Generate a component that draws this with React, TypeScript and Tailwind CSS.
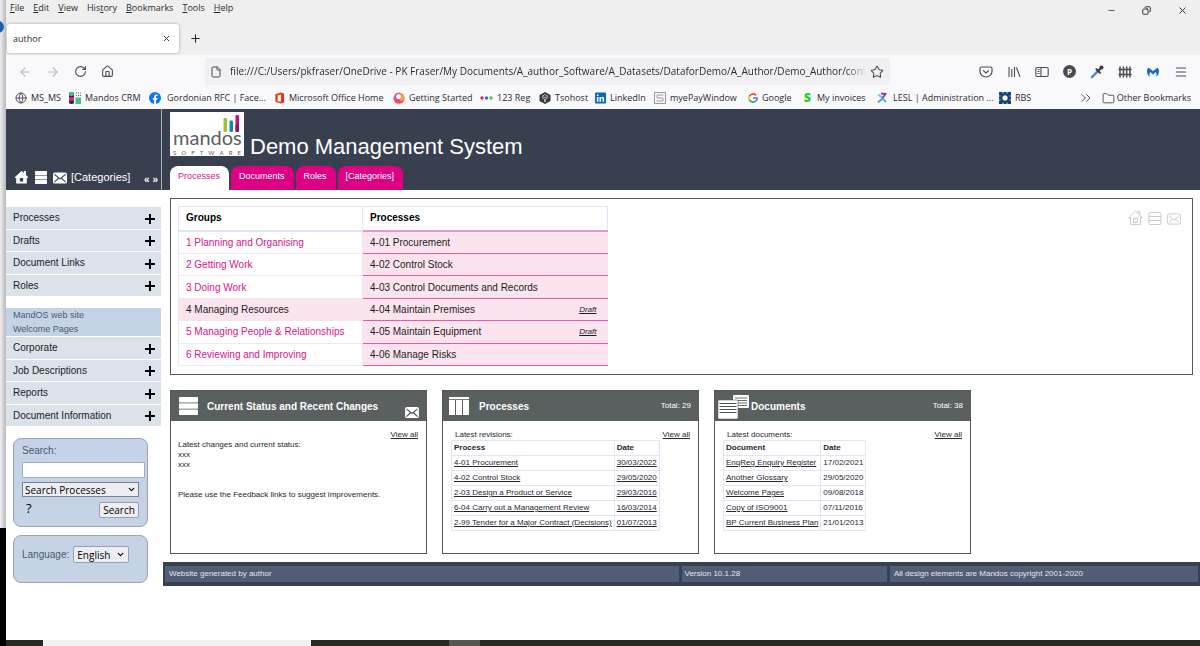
import React from "react";
import {
  ArrowLeft,
  ArrowRight,
  ChevronDown,
  ChevronsRight,
  Copy,
  File,
  Folder,
  Globe,
  House,
  Menu,
  Minus,
  Plus,
  RotateCw,
  Star,
  X,
} from "lucide-react";

/* ---------- page icons ---------- */

type IconProps = { className?: string };

function HomeGlyph({ className }: IconProps) {
  return (
    <svg viewBox="0 0 14 14" className={className} aria-hidden="true">
      <path fill="currentColor" fillRule="evenodd" d="M7 .5 9.500 2.800V.5h2.300v4.300L14 7v1h-1.300v6H1.300V8H0V7zM5.200 8v3.800h3.600V8z" />
    </svg>
  );
}

function HomeOutline({ className }: IconProps) {
  return (
    <svg viewBox="0 0 15 15" className={className} fill="none" stroke="currentColor" aria-hidden="true">
      <path d="M.6 7.800 7.500 1.200l6.900 6.600h-2v6.600H2.600V7.800zM10 3.400V1.600h2v3.700M5.500 8.500h4v4h-4z" />
    </svg>
  );
}

function ListGlyph({ className }: IconProps) {
  return (
    <svg viewBox="0 0 20 20" className={className} preserveAspectRatio="none" aria-hidden="true">
      <g fill="currentColor">
        <rect x="0" y="0" width="20" height="6" rx="1" />
        <rect x="0" y="7" width="20" height="6" />
        <rect x="0" y="14" width="20" height="6" rx="1" />
      </g>
    </svg>
  );
}

function ListOutline({ className }: IconProps) {
  return (
    <svg viewBox="0 0 14 14" className={className} fill="none" stroke="currentColor" aria-hidden="true">
      <rect x="1" y="1.500" width="12" height="4" rx="1" />
      <rect x="1" y="5.500" width="12" height="4" />
      <rect x="1" y="9.500" width="12" height="4" rx="1" />
    </svg>
  );
}

function MailGlyph({ className }: IconProps) {
  return (
    <svg viewBox="0 0 15 12" className={className} aria-hidden="true">
      <rect width="15" height="12" rx="2" fill="currentColor" />
      <path d="M1.500 2 7.500 7l6-5M1.500 10.500l4.500-4.500M13.500 10.500 9 6" fill="none" stroke="#4a505c" strokeWidth="1.200" />
    </svg>
  );
}

function MailOutline({ className }: IconProps) {
  return (
    <svg viewBox="0 0 15 12" className={className} fill="none" stroke="currentColor" aria-hidden="true">
      <rect x=".5" y=".5" width="14" height="11" rx="2" />
      <path d="m2 2.500 5.500 4.500L13 2.500M2 10l4-4M13 10 9 6" />
    </svg>
  );
}

function ColumnsGlyph({ className }: IconProps) {
  return (
    <svg viewBox="0 0 20 18" className={className} aria-hidden="true">
      <g fill="#fff">
        <rect width="20" height="2.200" />
        <rect x="0" y="3" width="6" height="15" />
        <rect x="7" y="3" width="6" height="15" />
        <rect x="14" y="3" width="6" height="15" />
      </g>
    </svg>
  );
}

function DocsGlyph({ className }: IconProps) {
  return (
    <svg viewBox="0 0 31 25" className={className} aria-hidden="true">
      <rect x="15" y="1" width="16" height="13" rx="1" fill="#fff" />
      <path d="M17 4h12M17 6.500h12M17 9h12M17 11.500h12" stroke="#5a5f60" strokeWidth=".9" />
      <rect x="0" y="6" width="20" height="19" rx="1" fill="#fff" stroke="#5a5f60" strokeWidth=".6" />
      <path d="M1.500 9.500h17M1.500 12.500h17M1.500 15.500h17M1.500 18.500h17" stroke="#4d5253" strokeWidth="1.200" />
    </svg>
  );
}

function MandosLogo() {
  return (
    <div className="relative flex h-11 w-[74px] flex-col justify-end overflow-hidden bg-white px-[3px]">
      <svg viewBox="0 0 17 18" className="absolute right-[4px] top-[3px] h-[18px] w-[17px]" aria-hidden="true">
        <rect x="0.500" y="3" width="3.500" height="14" rx="1.200" fill="#9cc13c" />
        <rect x="6.500" y="5.500" width="3.500" height="11.500" rx="1.200" fill="#1b83b5" />
        <rect x="12.500" y="0" width="3.500" height="17" rx="1.200" fill="#c4107c" />
        <rect x="12.500" y="9.500" width="3.500" height="7.500" rx="1.200" fill="#7a1d6f" />
      </svg>
      <div className="text-center font-['Lato',sans-serif] text-[20px] leading-6 text-[#5d6062]">mandos</div>
      <div className="flex justify-between font-['Lato',sans-serif] text-[6px] leading-[7px] text-[#5d6062]">
        {"SOFTWARE".split("").map((c, i) => (
          <span key={i}>{c}</span>
        ))}
      </div>
    </div>
  );
}

/* ---------- browser chrome ---------- */

const menus = ["File", "Edit", "View", "History", "Bookmarks", "Tools", "Help"];
const menuKey: Record<string, number> = { File: 0, Edit: 0, View: 0, History: 3, Bookmarks: 0, Tools: 0, Help: 0 };

function MenuBar() {
  return (
    <nav className="flex h-4 items-center gap-[9px] pl-1 text-[9px] text-[#2b2b2f]">
      {menus.map((m) => (
        <button key={m} type="button" className="leading-4">
          {m.slice(0, menuKey[m])}
          <span className="underline">{m[menuKey[m]]}</span>
          {m.slice(menuKey[m] + 1)}
        </button>
      ))}
    </nav>
  );
}

function TabStrip() {
  return (
    <div className="flex h-[39px] items-start pt-2">
      <div className="ml-px flex h-[29px] w-[172px] items-center justify-between rounded-[3px] bg-white pl-[6px] pr-2 text-[9px] shadow-[0_0_3px_rgba(0,0,0,0.35)]">
        <span>author</span>
        <button type="button" aria-label="Close tab">
          <X className="size-[9px]" strokeWidth={2.5} />
        </button>
      </div>
      <button type="button" aria-label="New tab" className="ml-[10px] mt-2">
        <Plus className="size-[13px]" strokeWidth={2} />
      </button>
    </div>
  );
}

function NavToolbar() {
  return (
    <div className="flex h-[33px] items-center bg-[#f9f9fb] text-[#4c4c52]">
      <div className="flex w-[199px] items-center gap-[14px] pl-3">
        <ArrowLeft className="size-[14px] text-[#b9b9bf]" />
        <ArrowRight className="size-[14px] text-[#b9b9bf]" />
        <RotateCw className="size-[13px]" />
        <House className="size-[13px]" />
      </div>
      <div className="flex h-[27px] w-[685px] items-center rounded-[3px] bg-[#f0f0f4] pl-1">
        <File className="ml-px size-3 shrink-0" />
        <input
          aria-label="Address"
          className="ml-2 min-w-0 flex-1 bg-transparent text-[10px] text-[#2b2b33] outline-none [mask-image:linear-gradient(to_right,black_97%,transparent)]"
          defaultValue="file:///C:/Users/pkfraser/OneDrive - PK Fraser/My Documents/A_author_Software/A_Datasets/DataforDemo/A_Author/Demo_Author/content"
        />
        <Star className="ml-1 mr-[6px] size-[14px] shrink-0" strokeWidth={1.8} />
      </div>
      <div className="ml-auto flex items-center gap-[14px] pr-3">
        <svg viewBox="0 0 14 14" className="size-[14px]" fill="none" stroke="currentColor" strokeWidth="1.200" aria-hidden="true">
          <path d="M2.500 2h9A1.500 1.500 0 0 1 13 3.500V6.500a6 5.500 0 0 1-12 0v-3A1.500 1.500 0 0 1 2.500 2zM4.200 5.500 7 8l2.800-2.500" />
        </svg>
        <svg viewBox="0 0 14 14" className="size-[14px]" fill="none" stroke="currentColor" strokeWidth="1.100" aria-hidden="true">
          <path d="M2 2v10M4.800 4v8M7.500 2v10M9.500 2.500 13 12" />
        </svg>
        <svg viewBox="0 0 14 14" className="size-[14px]" fill="none" stroke="currentColor" strokeWidth="1.100" aria-hidden="true">
          <rect x=".8" y="2.500" width="12.400" height="9" rx="1.500" />
          <path d="M6 2.500v9M2.500 4.500h2M2.500 6.500h2M2.500 8.500h2" />
        </svg>
        <span className="flex size-[13px] items-center justify-center rounded-full bg-[#4b4b4f] text-[8px] font-bold text-white">P</span>
        <svg viewBox="0 0 14 14" className="size-[14px]" aria-hidden="true">
          <path d="M2 12.200 7.500 6.500" stroke="#4b86cc" strokeWidth="2.400" strokeLinecap="round" />
          <path d="m6.500 4.300 3.400 3.400M8 6l3-3" stroke="#3c3c44" strokeWidth="2.200" strokeLinecap="round" />
          <circle cx="11.500" cy="2.600" r="2" fill="#3c3c44" />
        </svg>
        <svg viewBox="0 0 14 14" className="size-[14px]" fill="none" stroke="currentColor" strokeWidth="1.500" aria-hidden="true">
          <path d="M2 1.500v11M5.400 1.500v11M8.700 1.500v11M12 1.500v11M.5 4.500h13M.5 9.500h13" />
        </svg>
        <svg viewBox="0 0 14 14" className="size-[14px]" aria-hidden="true">
          <path d="M2.800 4.200 7 7.800l4.200-3.600" fill="none" stroke="#1766c8" strokeWidth="2.400" />
          <path d="M2.500 2.500C.2 4.500.5 9.500 3.800 11.800c-.6-2-.4-3.800.7-5.300zM11.500 2.500c2.300 2 2 7-1.300 9.300.6-2 .4-3.800-.7-5.300z" fill="#1766c8" />
        </svg>
        <Menu className="size-[14px]" strokeWidth={1.8} />
      </div>
    </div>
  );
}

function OfficeIcon() {
  return (
    <svg viewBox="0 0 12 12" className="h-3 w-[11px]" aria-hidden="true">
      <path fillRule="evenodd" fill="#dc3c12" d="M7.500 0 11 1.200v9.600L7.500 12 1.500 10V2zM7.500 2.200 4 3v5.600l-1.200.7L7.500 10z" />
    </svg>
  );
}

function Bookmark({ icon, label, width }: { icon: React.ReactNode; label: string; width: string }) {
  return (
    <a href="#" className={`flex shrink-0 items-center gap-1 ${width}`}>
      {icon}
      <span className="whitespace-nowrap">{label}</span>
    </a>
  );
}

function BookmarksBar() {
  return (
    <div className="flex h-[21px] items-center bg-[#f9f9fb] pb-px pl-[9px] text-[9px] text-[#2b2b33]">
      <Bookmark width="w-[54px]" label="MS_MS" icon={<Globe className="size-3 text-[#55555c]" />} />
      <Bookmark
        width="w-20"
        label="Mandos CRM"
        icon={
          <svg viewBox="0 0 12 12" className="size-3" aria-hidden="true">
            <rect x="0" y="0" width="5" height="12" rx="2" fill="#1f2a4d" />
            <rect x="0" y="0" width="5" height="4" rx="2" fill="#48bd8d" />
            <rect x="0" y="5" width="5" height="4" fill="#e0226e" />
            <rect x="6.500" y="5.500" width="5.500" height="6.500" fill="#48bd8d" />
            <path d="M7 1h5M7 3.500h5" stroke="#6a6a88" strokeDasharray="1.200 .8" />
          </svg>
        }
      />
      <Bookmark
        width="w-[125px]"
        label="Gordonian RFC | Face..."
        icon={
          <svg viewBox="0 0 12 12" className="mr-[2px] size-3" aria-hidden="true">
            <circle cx="6" cy="6" r="6" fill="#0f77ef" />
            <path d="M5.200 12V7.700H3.800V6h1.400V4.800c0-1.500.9-2.300 2.200-2.300l1.100.1v1.500h-.7c-.7 0-.9.4-.9.900v1h1.600l-.3 1.700H6.900V12z" fill="#fff" />
          </svg>
        }
      />
      <Bookmark width="w-[119px]" label="Microsoft Office Home" icon={<OfficeIcon />} />
      <Bookmark
        width="w-[87px]"
        label="Getting Started"
        icon={
          <svg viewBox="0 0 12 12" className="size-3" aria-hidden="true">
            <circle cx="6" cy="6.300" r="5.500" fill="#ff4a4c" />
            <path d="M1 4C2 1 5 0 7.500.7 10.500 1.600 12 4.500 11.300 7.500L8 9z" fill="#ffa52e" />
            <circle cx="5.200" cy="4.600" r="3.400" fill="#8a4fd8" />
            <circle cx="5.600" cy="4.600" r="2.700" fill="#fbeef4" />
          </svg>
        }
      />
      <Bookmark
        width="w-[59px]"
        label="123 Reg"
        icon={
          <svg viewBox="0 0 13 12" className="h-3 w-[13px]" aria-hidden="true">
            <circle cx="2" cy="6" r="1.700" fill="#d6246e" />
            <circle cx="6.500" cy="6" r="1.700" fill="#2572c8" />
            <circle cx="11" cy="6" r="1.700" fill="#5fb946" />
          </svg>
        }
      />
      <Bookmark
        width="w-14"
        label="Tsohost"
        icon={
          <svg viewBox="0 0 12 12" className="size-3" aria-hidden="true">
            <path d="M6 0 11.500 3v6L6 12 .5 9V3z" fill="#3a3a3e" />
            <path d="m6 2.500 3 1.600L6 5.700 3 4.100zM2.800 5.500 5.500 7v3M9.200 5.500 6.500 7v3" fill="none" stroke="#c9c9cc" strokeWidth=".8" />
          </svg>
        }
      />
      <Bookmark
        width="w-[59px]"
        label="LinkedIn"
        icon={
          <svg viewBox="0 0 12 12" className="h-3 w-[11px]" aria-hidden="true">
            <rect width="12" height="12" rx="1" fill="#0a6ab5" />
            <path d="M2 5h1.800v5H2zM2 2.200h1.800v1.700H2zM4.900 5h1.700v.7C7.600 4.500 10 4.700 10 7v3H8.300V7.300c0-1.200-1.700-1.200-1.700 0V10H4.900z" fill="#fff" />
          </svg>
        }
      />
      <Bookmark
        width="w-[94px]"
        label="myePayWindow"
        icon={
          <svg viewBox="0 0 12 12" className="size-3" fill="none" stroke="#9a9a9e" aria-hidden="true">
            <rect x=".5" y=".5" width="11" height="11" />
            <path d="M9.500 3H3v3h6v3H2.500" />
          </svg>
        }
      />
      <Bookmark
        width="w-14"
        label="Google"
        icon={
          <svg viewBox="0 0 12 12" className="h-[10px] w-[10px]" fill="none" strokeWidth="2" aria-hidden="true">
            <path d="M9.700 2.700A4.900 4.900 0 0 0 1.600 4" stroke="#ea4335" />
            <path d="M1.600 4a4.900 4.900 0 0 0 0 4" stroke="#fbbc05" />
            <path d="M1.600 8a4.900 4.900 0 0 0 7.600 1.800" stroke="#34a853" />
            <path d="M9.200 9.800A4.900 4.900 0 0 0 11 6H6" stroke="#4285f4" />
          </svg>
        }
      />
      <Bookmark
        width="w-[73px]"
        label="My invoices"
        icon={<span className="w-[9px] text-[12px] font-black leading-3 text-[#1fce1f]">S</span>}
      />
      <Bookmark
        width="w-[122px]"
        label="LESL | Administration ..."
        icon={
          <svg viewBox="0 0 10 12" className="mr-[2px] h-3 w-[10px]" fill="none" strokeWidth="1.800" aria-hidden="true">
            <path d="M1 2.500 5.500 5.800" stroke="#6bc4dc" />
            <path d="M4 1.500 8.500 2 5.500 6" stroke="#7c3f9d" />
            <path d="M5.500 6.500 9 10" stroke="#35c5a0" />
            <path d="M1 10.500 5.500 6.500" stroke="#5b97df" />
          </svg>
        }
      />
      <Bookmark
        width="w-10"
        label="RBS"
        icon={
          <svg viewBox="0 0 12 12" className="size-3" aria-hidden="true">
            <rect width="12" height="12" fill="#14427f" />
            <path d="M6 3.200 8 4 8.800 6 8 8l-2 .8L4 8l-.8-2L4 4z" fill="#fff" />
            <path d="M4 0v1.500M8 0v1.500M4 10.500V12M8 10.500V12M0 4h1.500M0 8h1.500M10.500 4H12M10.500 8H12" stroke="#dfe6f2" strokeWidth=".9" />
          </svg>
        }
      />
      <div className="ml-auto flex items-center pr-[9px]">
        <ChevronsRight className="mr-1 size-4 text-[#55555c]" strokeWidth={1.5} />
        <Bookmark width="w-auto" label="Other Bookmarks" icon={<Folder className="ml-1 -mr-[2px] size-[13px] text-[#55555c]" strokeWidth={1.8} />} />
      </div>
    </div>
  );
}

/* ---------- sidebar ---------- */

function NavGroup({ items }: { items: string[] }) {
  return (
    <ul className="grid h-[89px] auto-rows-fr gap-px">
      {items.map((item) => (
        <li key={item} className="bg-[#dbe2e9]">
          <button type="button" className="flex h-full w-full items-center justify-between pl-[7px] pr-[6px] text-[10px] text-[#1d2026]">
            <span>{item}</span>
            <svg viewBox="0 0 10 10" className="mt-[2px] size-[10px]" aria-hidden="true">
              <path d="M5 0v10M0 5h10" stroke="#000" strokeWidth="2" />
            </svg>
          </button>
        </li>
      ))}
    </ul>
  );
}

function Sidebar() {
  return (
    <aside className="w-[155px] shrink-0 pt-[17px]">
      <NavGroup items={["Processes", "Drafts", "Document Links", "Roles"]} />
      <div className="mt-3 flex h-7 flex-col bg-[#c5d3e7] pl-[7px] text-[9px] leading-[14px] text-[#4c596b]">
        <a href="#">MandOS web site</a>
        <a href="#">Welcome Pages</a>
      </div>
      <div className="mt-px">
        <NavGroup items={["Corporate", "Job Descriptions", "Reports", "Document Information"]} />
      </div>
      <form className="mx-[7px] mt-3 h-[89px] w-[135px] rounded-lg border border-[#9aa3b8] bg-[#c5d3e7] pl-2 pt-[6px] text-[10px]">
        <label htmlFor="query" className="block leading-3 text-[#4c596b]">
          Search:
        </label>
        <input id="query" className="mt-[5px] block h-4 w-[123px] border border-[#a9adb5] bg-white px-1" />
        <div className="relative mt-1 w-[117px] font-['Open_Sans',sans-serif]">
          <select aria-label="Search in" className="block h-[15px] w-full appearance-none border border-[#7d828c] bg-[#eceef1] pl-[2px] text-[10px] leading-[12px]">
            <option>Search Processes</option>
          </select>
          <ChevronDown className="pointer-events-none absolute right-[3px] top-[3px] size-[9px]" strokeWidth={3} />
        </div>
        <div className="mt-[5px] flex w-[117px] items-start justify-between font-['Open_Sans',sans-serif]">
          <button type="button" className="pl-1 text-[13px] leading-3">
            ?
          </button>
          <button type="submit" className="h-4 w-10 rounded-[2px] border border-[#9a9fa8] bg-[#eceef1] text-[10px] leading-[14px]">
            Search
          </button>
        </div>
      </form>
      <div className="mx-[7px] mt-2 flex h-12 w-[135px] items-start gap-1 rounded-lg border border-[#9aa3b8] bg-[#c5d3e7] pl-2 pt-[10px] text-[10px]">
        <label htmlFor="language" className="leading-[18px] text-[#4c596b]">
          Language:
        </label>
        <div className="relative font-['Open_Sans',sans-serif]">
          <select id="language" className="block h-[17px] w-14 appearance-none rounded-[2px] border border-[#9a9fa8] bg-[#eceef1] pl-[3px] text-[10px] leading-[14px]">
            <option>English</option>
          </select>
          <ChevronDown className="pointer-events-none absolute right-[4px] top-1 size-[9px]" strokeWidth={3} />
        </div>
      </div>
    </aside>
  );
}

/* ---------- main area ---------- */

const groups = [
  "1 Planning and Organising",
  "2 Getting Work",
  "3 Doing Work",
  "4 Managing Resources",
  "5 Managing People & Relationships",
  "6 Reviewing and Improving",
];

const processes = [
  { name: "4-01 Procurement", draft: false },
  { name: "4-02 Control Stock", draft: false },
  { name: "4-03 Control Documents and Records", draft: false },
  { name: "4-04 Maintain Premises", draft: true },
  { name: "4-05 Maintain Equipment", draft: true },
  { name: "4-06 Manage Risks", draft: false },
];

function ProcessTable() {
  return (
    <table className="h-[160px] w-[430px] table-fixed border-collapse text-[10px]">
      <thead>
        <tr className="h-6 text-left text-black">
          <th className="w-[184px] border border-b-2 border-[#e4e2f5] pb-px pl-[7px]">Groups</th>
          <th className="border border-b-2 border-[#e4e2f5] border-b-[#e69ac8] pb-px pl-[7px]">Processes</th>
        </tr>
      </thead>
      <tbody>
        {groups.map((g, i) => (
          <tr key={g}>
            <td className={`border border-[#ece9f5] pl-[7px] ${i === 3 ? "bg-[#fce4ee] text-[#1c1c1f]" : "text-[#d6158a]"}`}>
              <a href="#">{g}</a>
            </td>
            <td className="border-y border-[#de5cab] bg-[#fce4ee] pl-[7px] pr-[11px] text-[#1c1c1f]">
              <div className="flex items-center justify-between">
                <a href="#">{processes[i].name}</a>
                {processes[i].draft && (
                  <a href="#" className="text-[8px] italic underline">
                    Draft
                  </a>
                )}
              </div>
            </td>
          </tr>
        ))}
      </tbody>
    </table>
  );
}

function Card({ icon, title, right, children }: { icon: React.ReactNode; title: string; right: React.ReactNode; children: React.ReactNode }) {
  return (
    <section className="flex h-[164px] w-[257px] flex-col border border-[#55595a]">
      <header className="flex h-[30px] items-center bg-[#5a5f60] text-white">
        <div className="flex h-full w-9 shrink-0 items-center overflow-visible">{icon}</div>
        <h2 className="text-[10px] font-bold">{title}</h2>
        <div className="ml-auto pr-[7px] text-[8px]">{right}</div>
      </header>
      <div className="relative flex-1 pt-[9px] text-[8px] text-[#26282b]">
        <a href="#" className="absolute right-2 top-[9px] leading-[10px] underline">
          View all
        </a>
        {children}
      </div>
    </section>
  );
}

function RevisionTable({ caption, heads, rows, linkDates }: { caption: string; heads: [string, string]; rows: [string, string][]; linkDates: boolean }) {
  return (
    <div className="pl-2">
      <table className="border-collapse text-left">
        <caption className="whitespace-nowrap pl-1 text-left leading-[10px]">{caption}</caption>
        <thead>
          <tr className="h-[15px]">
            {heads.map((h) => (
              <th key={h} className="border border-[#e4e4f4] px-[2px]">
                {h}
              </th>
            ))}
          </tr>
        </thead>
        <tbody>
          {rows.map(([name, date]) => (
            <tr key={name} className="h-[15px]">
              <td className="whitespace-nowrap border border-[#e4e4f4] px-[2px] leading-[14px]">
                <a href="#" className="underline">
                  {name}
                </a>
              </td>
              <td className="border border-[#e4e4f4] px-[2px] leading-[14px]">
                {linkDates ? (
                  <a href="#" className="underline">
                    {date}
                  </a>
                ) : (
                  date
                )}
              </td>
            </tr>
          ))}
        </tbody>
      </table>
    </div>
  );
}

function Dashboard() {
  return (
    <div className="mt-[15px] flex gap-[15px] pl-[7px]">
      <Card
        icon={<ListGlyph className="ml-2 h-[18px] w-[19px]" />}
        title="Current Status and Recent Changes"
        right={<MailGlyph className="mt-3 h-[11px] w-[14px]" />}
      >
        <div className="pl-[7px] pt-[10px] leading-[10px]">
          <p>Latest changes and current status:</p>
          <p>xxx</p>
          <p>xxx</p>
          <p className="mt-5">Please use the Feedback links to suggest improvements.</p>
        </div>
      </Card>
      <Card icon={<ColumnsGlyph className="ml-[6px] h-[18px] w-5" />} title="Processes" right="Total: 29">
        <RevisionTable
          caption="Latest revisions:"
          heads={["Process", "Date"]}
          linkDates
          rows={[
            ["4-01 Procurement", "30/03/2022"],
            ["4-02 Control Stock", "29/05/2020"],
            ["2-03 Design a Product or Service", "29/03/2016"],
            ["6-04 Carry out a Management Review", "16/03/2014"],
            ["2-99 Tender for a Major Contract (Decisions)", "01/07/2013"],
          ]}
        />
      </Card>
      <Card icon={<DocsGlyph className="ml-[3px] h-[25px] w-[31px]" />} title="Documents" right="Total: 38">
        <RevisionTable
          caption="Latest documents:"
          heads={["Document", "Date"]}
          linkDates={false}
          rows={[
            ["EnqReg Enquiry Register", "17/02/2021"],
            ["Another Glossary", "29/05/2020"],
            ["Welcome Pages", "09/08/2018"],
            ["Copy of ISO9001", "07/11/2016"],
            ["BP Current Business Plan", "21/01/2013"],
          ]}
        />
      </Card>
    </div>
  );
}

function PageHeader() {
  return (
    <header className="flex h-[81px] bg-[#384050] text-white">
      <div className="flex w-[156px] shrink-0 items-end border-r border-[#aab0bb] pb-[6px] pl-[9px]">
        <HomeGlyph className="h-[14px] w-[13px]" />
        <ListGlyph className="ml-[7px] h-[13px] w-3" />
        <MailGlyph className="ml-[6px] h-3 w-[14px]" />
        <span className="ml-1 text-[11px] leading-[13px]">[Categories]</span>
        <span className="ml-auto flex gap-[3px] pr-[3px] text-[10px] font-bold leading-[8px]">
          <button type="button">«</button>
          <button type="button">»</button>
        </span>
      </div>
      <div className="flex flex-1 flex-col justify-between pl-2 pt-[3px]">
        <div className="flex items-end gap-[6px]">
          <MandosLogo />
          <h1 className="text-[22px] leading-[18px]">Demo Management System</h1>
        </div>
        <nav className="flex gap-[2px] text-[9px]">
          <a href="#" className="h-6 rounded-t-lg bg-white pl-2 pr-[9px] pt-1 leading-[13px] text-[#d6158a]">
            Processes
          </a>
          {["Documents", "Roles", "[Categories]"].map((t) => (
            <a key={t} href="#" className="h-6 rounded-t-lg bg-[#dd0082] pl-2 pr-[9px] pt-1 leading-[13px]">
              {t}
            </a>
          ))}
        </nav>
      </div>
    </header>
  );
}

function PageFooter() {
  return (
    <footer className="mt-2 grid grid-cols-[5fr_2fr_3fr] gap-[3px] bg-[#384154] px-[2px] py-1 text-[8px] leading-4 text-[#e3e7ee]">
      <span className="bg-[#515d74] pl-1">Website generated by author</span>
      <span className="bg-[#515d74] pl-[3px]">Version 10.1.28</span>
      <span className="bg-[#515d74] pl-1">All design elements are Mandos copyright 2001-2020</span>
    </footer>
  );
}

export default function App() {
  return (
    <div className="flex min-h-screen bg-white font-['Liberation_Sans',Arial,sans-serif]">
      <div className="relative flex w-[6px] shrink-0 flex-col overflow-hidden">
        <div className="h-[528px] bg-linear-to-r from-[#f0f0f1] to-[#b9b9bd]" />
        <div className="flex-1 bg-black" />
        <span className="absolute -left-2 top-[21px] size-3 rounded-full bg-[#1863a8]" />
      </div>
      <div className="flex min-w-0 flex-1 flex-col">
        <div className="bg-[#efefef] font-['Open_Sans',sans-serif] text-[#2b2b2f]">
          <div className="flex">
            <div className="flex-1">
              <MenuBar />
              <TabStrip />
            </div>
            <div className="flex h-[21px] items-center gap-[26px] pr-3">
              <Minus className="size-[9px]" />
              <Copy className="size-[9px] -scale-x-100" strokeWidth={2.5} />
              <X className="size-[11px]" />
            </div>
          </div>
          <NavToolbar />
          <BookmarksBar />
        </div>
        <div className="flex-1">
          <PageHeader />
          <div className="flex">
            <Sidebar />
            <main className="min-w-0 flex-1 pl-[2px] pt-2">
              <div className="mx-[7px] flex h-[177px] items-start justify-between border border-[#55595a] pl-[7px] pt-[7px]">
                <ProcessTable />
                <div className="flex items-end gap-[5px] pr-[11px] pt-1 text-[#c9cacc]">
                  <HomeOutline className="size-[15px]" />
                  <ListOutline className="size-[14px]" />
                  <MailOutline className="h-3 w-[14px]" />
                </div>
              </div>
              <Dashboard />
              <PageFooter />
            </main>
          </div>
        </div>
        <div className="flex h-[6px] bg-[#262822]">
          <div className="w-[37px]" />
          <div className="w-[268px] bg-[#f1f1f1]" />
          <div className="ml-[138px] w-[31px] bg-[#55564f]" />
        </div>
      </div>
    </div>
  );
}
